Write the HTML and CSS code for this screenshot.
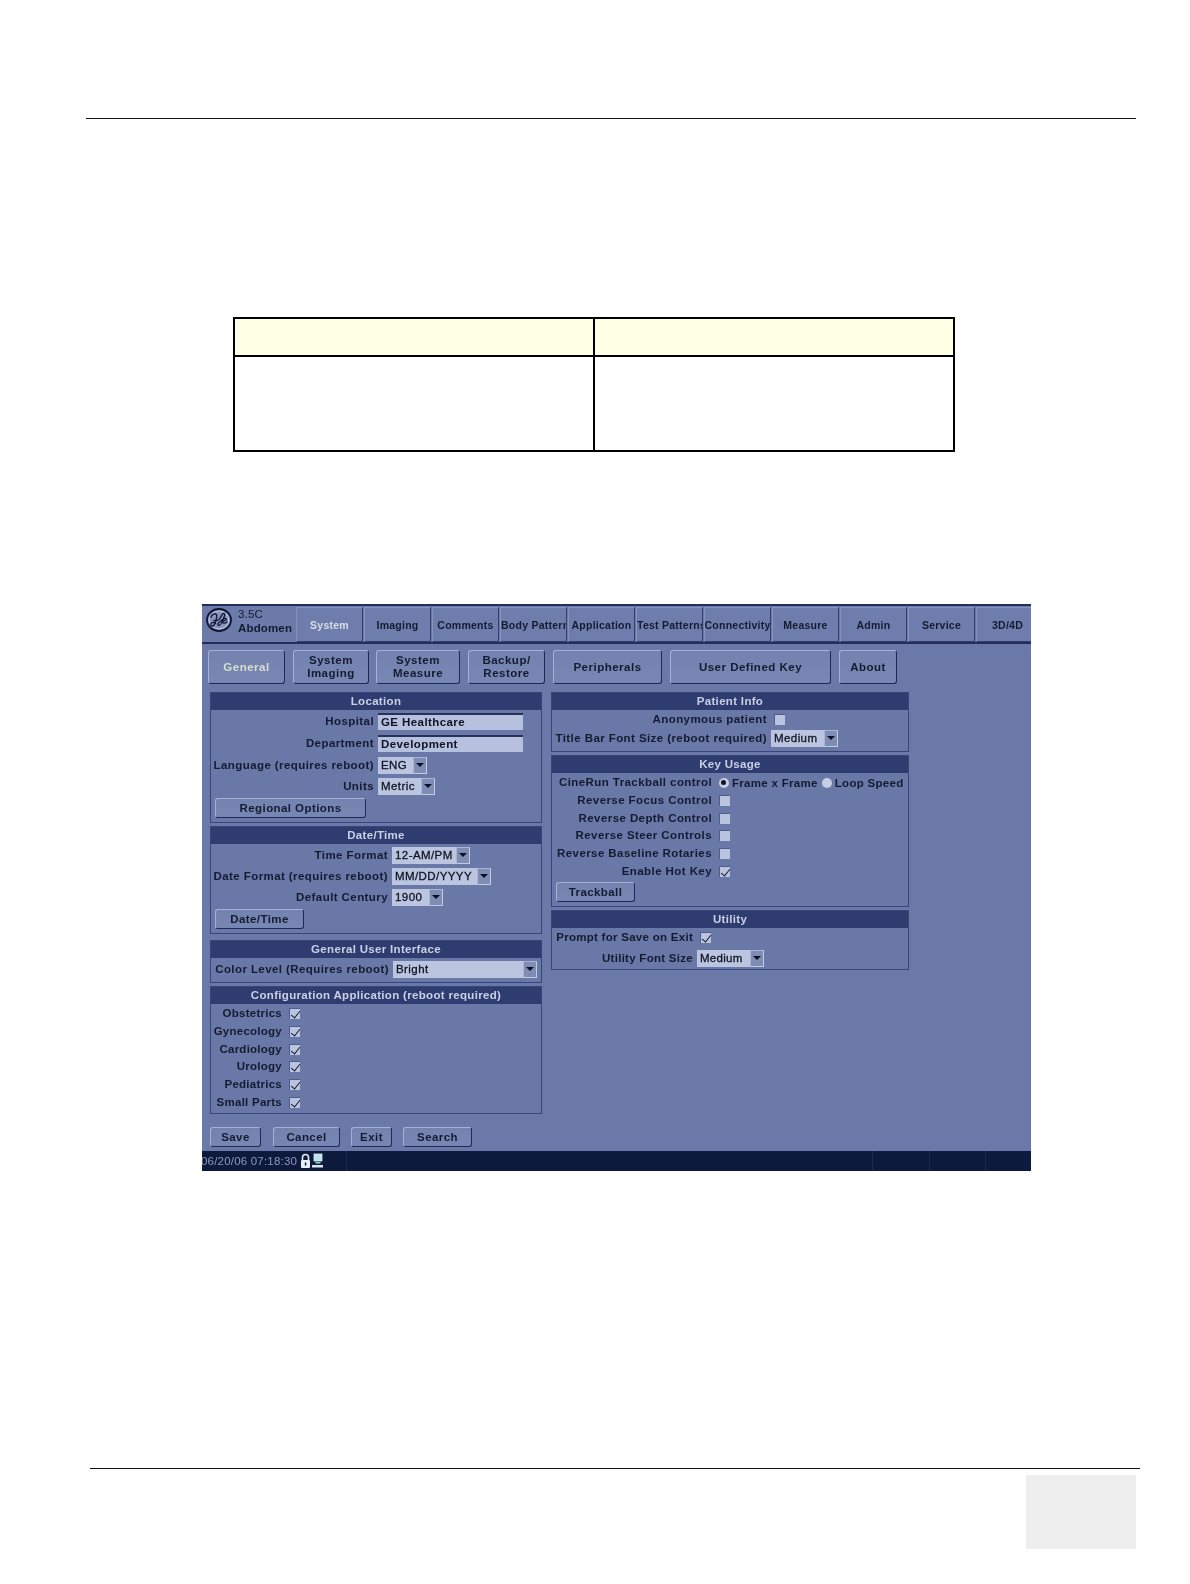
FILE: index.html
```html
<!DOCTYPE html>
<html lang="en">
<head>
<meta charset="utf-8">
<title>System General</title>
<link rel="stylesheet" href="styles.css">
</head>
<body>
<div class="page">
  <hr class="rule rule-top">
  <div class="doc-table">
    <div class="cell head"></div><div class="cell head"></div>
    <div class="cell"></div><div class="cell"></div>
  </div>

  <div class="app">
    <div class="topbar">
      <svg class="logo" viewBox="0 0 26 24" aria-hidden="true">
        <ellipse cx="13" cy="12" rx="12" ry="11" fill="#8995bd" stroke="#0e1630" stroke-width="1.800"/>
        <ellipse cx="13" cy="12" rx="9.800" ry="9" fill="none" stroke="#ccd3e8" stroke-width=".8"/>
        <path d="M5 9.500c0-2.500 2.500-4 4.500-3.500s1.500 3 .5 6-1.500 6-3.500 6-2.500-2-1-3 3-.5 4 .5" fill="none" stroke="#0e1630" stroke-width="1.300" stroke-linecap="round"/>
        <path d="M8 12.500c2 .5 3.500 0 5-1 2-1.500 2.500-6 4.500-6s1 2.500 0 5-2.500 7-4.500 7-1.500-2.500.5-3.500 3-3 5-3.500 2.500 1 1 1.800-3 .7-3 1.700 2 2 4.500 0" fill="none" stroke="#0e1630" stroke-width="1.300" stroke-linecap="round"/>
      </svg>
      <div class="probe"><span>3.5C</span><strong>Abdomen</strong></div>
      <nav class="tabs">
        <div class="tab on">System</div>
        <div class="tab">Imaging</div>
        <div class="tab">Comments</div>
        <div class="tab start">Body Patterns</div>
        <div class="tab">Application</div>
        <div class="tab start">Test Patterns</div>
        <div class="tab">Connectivity</div>
        <div class="tab">Measure</div>
        <div class="tab">Admin</div>
        <div class="tab">Service</div>
        <div class="tab last">3D/4D</div>
      </nav>
    </div>

    <div class="subtabs">
      <div class="btn sub w-general on">General</div>
      <div class="btn sub w-imaging">System<br>Imaging</div>
      <div class="btn sub w-measure">System<br>Measure</div>
      <div class="btn sub w-backup">Backup/<br>Restore</div>
      <div class="btn sub w-periph">Peripherals</div>
      <div class="btn sub w-user">User Defined Key</div>
      <div class="btn sub w-about">About</div>
    </div>

    <div class="columns">
      <div class="col col-left">
        <section class="panel p-location">
          <h3>Location</h3>
          <div class="form f-location">
            <label>Hospital</label><div class="input">GE Healthcare</div>
            <label>Department</label><div class="input">Development</div>
            <label>Language (requires reboot)</label><div class="select s-eng"><span>ENG</span><i></i></div>
            <label>Units</label><div class="select s-metric"><span>Metric</span><i></i></div>
            <div class="btn small b-regional">Regional Options</div>
          </div>
        </section>
        <section class="panel p-date">
          <h3>Date/Time</h3>
          <div class="form f-date">
            <label>Time Format</label><div class="select s-time"><span>12-AM/PM</span><i></i></div>
            <label>Date Format (requires reboot)</label><div class="select s-dformat"><span>MM/DD/YYYY</span><i></i></div>
            <label>Default Century</label><div class="select s-century"><span>1900</span><i></i></div>
            <div class="btn small b-date">Date/Time</div>
          </div>
        </section>
        <section class="panel p-gui">
          <h3>General User Interface</h3>
          <div class="form f-gui">
            <label>Color Level (Requires reboot)</label><div class="select s-bright"><span>Bright</span><i></i></div>
          </div>
        </section>
        <section class="panel p-config">
          <h3>Configuration Application (reboot required)</h3>
          <div class="form f-config">
            <label>Obstetrics</label><div class="check on"></div>
            <label>Gynecology</label><div class="check on"></div>
            <label>Cardiology</label><div class="check on"></div>
            <label>Urology</label><div class="check on"></div>
            <label>Pediatrics</label><div class="check on"></div>
            <label>Small Parts</label><div class="check on"></div>
          </div>
        </section>
      </div>

      <div class="col col-right">
        <section class="panel p-patient">
          <h3>Patient Info</h3>
          <div class="form f-patient">
            <label>Anonymous patient</label><div class="check"></div>
            <label>Title Bar Font Size (reboot required)</label><div class="select s-medium"><span>Medium</span><i></i></div>
          </div>
        </section>
        <section class="panel p-keys">
          <h3>Key Usage</h3>
          <div class="form f-keys">
            <label>CineRun Trackball control</label>
            <div class="radios"><b class="radio on"></b><span class="r1">Frame x Frame</span><b class="radio"></b><span>Loop Speed</span></div>
            <label>Reverse Focus Control</label><div class="check"></div>
            <label>Reverse Depth Control</label><div class="check"></div>
            <label>Reverse Steer Controls</label><div class="check"></div>
            <label>Reverse Baseline Rotaries</label><div class="check"></div>
            <label>Enable Hot Key</label><div class="check on"></div>
            <div class="btn small b-track">Trackball</div>
          </div>
        </section>
        <section class="panel p-utility">
          <h3>Utility</h3>
          <div class="form f-utility">
            <label>Prompt for Save on Exit</label><div class="check on"></div>
            <label>Utility Font Size</label><div class="select s-medium"><span>Medium</span><i></i></div>
          </div>
        </section>
      </div>
    </div>

    <div class="actions">
      <div class="btn act w-save">Save</div>
      <div class="btn act w-cancel">Cancel</div>
      <div class="btn act w-exit">Exit</div>
      <div class="btn act w-search">Search</div>
    </div>

    <div class="status">
      <span class="clock">06/20/06 07:18:30</span>
      <svg class="st-icon" viewBox="0 0 24 16" aria-hidden="true">
        <path d="M2.500 7V4.500a3 3 0 0 1 6 0V7" fill="none" stroke="#e8ecf4" stroke-width="1.600"/>
        <rect x="1" y="7" width="9" height="8" rx="1" fill="#e8ecf4"/>
        <rect x="4.800" y="9.500" width="1.500" height="3" fill="#0d1a3c"/>
        <rect x="14" y="1" width="8" height="7" fill="#b9e6ee" stroke="#dfe8f2" stroke-width=".8"/>
        <rect x="15.500" y="9" width="5" height="1.500" fill="#8fd0d8"/>
        <rect x="12" y="12" width="11" height="2.500" fill="#d9e2ee"/>
      </svg>
      <div class="seg s1"></div><div class="seg s2"></div><div class="seg s3"></div><div class="seg s4"></div>
    </div>
  </div>

  <div class="foot">
    <hr class="rule rule-bottom">
    <div class="pagebox"></div>
  </div>
</div>
</body>
</html>
```
FILE: styles.css
```css
* { box-sizing: border-box; }
html, body { margin: 0; padding: 0; background: #fff; }
body { font-family: "Liberation Sans", Arial, sans-serif; }
.page { width: 1190px; height: 1584px; display: flex; flex-direction: column; }

.rule { border: 0; height: 1px; background: #111; margin: 0; }
.rule-top { margin: 118px 0 0 86px; width: 1050px; }
.rule-bottom { margin: 0 0 0 90px; width: 1050px; }

.doc-table {
  margin: 198px 0 0 233px; width: 722px; height: 135px;
  display: grid; grid-template-columns: 360px 360px; grid-template-rows: 38px 95px;
  border-top: 2px solid #000; border-left: 2px solid #000;
}
.cell { border-right: 2px solid #000; border-bottom: 2px solid #000; background: #fff; }
.cell.head { background: #ffffe6; }

/* Application screenshot */
.app {
  margin: 152px 0 0 202px; width: 829px; height: 567px;
  background: #6b79a8; color: #141b30; overflow: hidden;
  font-size: 11.500px; font-weight: 700; letter-spacing: .42px;
  display: flex; flex-direction: column; filter: blur(.3px);
}
.topbar {
  height: 40px; display: flex; align-items: stretch; flex: none;
  background: #6c7aa9; border-top: 2px solid #232e58; border-bottom: 2px solid #232e58;
}
.logo { width: 26px; height: 24px; margin: 2px 0 0 4px; flex: none; }
.probe { width: 58px; flex: none; margin-left: 6px; display: flex; flex-direction: column; font-size: 11.500px; line-height: 14px; padding-top: 1px; letter-spacing: .15px; white-space: nowrap; }
.probe span { font-weight: 400; }
.tabs { display: flex; gap: 1px; flex: 1; padding-top: 1px; min-width: 0; }
.tab {
  width: 67px; flex: none; display: flex; align-items: center; justify-content: center;
  white-space: nowrap; overflow: hidden; font-size: 10.500px; letter-spacing: .25px;
  background: #6f7dac; border: 1px solid; border-color: #8793bd #323e6c #323e6c #8793bd; color: #141b30;
}
.tab.start { justify-content: flex-start; }
.tab.on { color: #d6dde6; }
.tab.last { width: 62px; border-right: 0; }

.btn {
  display: flex; align-items: center; justify-content: center; text-align: center; flex: none;
  background: linear-gradient(#7482b0, #7886b4); border: 1px solid; border-color: #a6b1d4 #1f2a54 #1f2a54 #a6b1d4;
  border-radius: 3px; color: #141b30;
}
.subtabs { display: flex; margin: 6px 0 0 6px; height: 34px; flex: none; }
.sub { line-height: 13px; letter-spacing: .5px; }
.sub.on { color: #d7decb; }
.w-general { width: 77px; margin-right: 8px; }
.w-imaging { width: 76px; margin-right: 7px; }
.w-measure { width: 84px; margin-right: 8px; }
.w-backup { width: 77px; margin-right: 8px; }
.w-periph { width: 109px; margin-right: 8px; }
.w-user { width: 161px; margin-right: 8px; }
.w-about { width: 58px; }

.columns { display: flex; gap: 9px; margin: 8px 0 0 8px; height: 435px; flex: none; }
.col { display: flex; flex-direction: column; }
.col-left { width: 332px; }
.col-right { width: 358px; }

.panel { border: 1px solid #38457a; flex: none; background: #6a78a8; }
.panel h3 {
  margin: 0; height: 17px; background: #2f3c70; color: #c9d0e4; font-size: 11.500px; font-weight: 700;
  line-height: 16px; text-align: center; letter-spacing: .32px;
}
.p-location { height: 131px; }
.p-date { height: 108px; margin-top: 3px; }
.p-gui { height: 43px; margin-top: 6px; }
.p-config { height: 128px; margin-top: 3px; }
.p-patient { height: 60px; }
.p-keys { height: 152px; margin-top: 3px; }
.p-utility { height: 60px; margin-top: 3px; }

.form { display: grid; align-items: start; column-gap: 4px; }
.form label { text-align: right; white-space: nowrap; line-height: 17px; height: 17px; }
.form .btn { grid-column: 1 / -1; justify-self: start; }

.f-location { grid-template-columns: 163px 1fr; grid-template-rows: 22px 22px 21px 20px 20px; padding-top: 3px; }
.f-date { grid-template-columns: 177px 1fr; grid-template-rows: 21px 21px 20px 20px; padding-top: 3px; }
.f-gui { grid-template-columns: 178px 1fr; padding-top: 3px; }
.f-config { grid-template-columns: 71px 1fr; grid-auto-rows: 17.800px; padding-top: 1px; column-gap: 7px; letter-spacing: .25px; }
.f-patient { grid-template-columns: 215px 1fr; grid-template-rows: 19px 17px; padding-top: 1px; }
.f-keys { grid-template-columns: 160px 1fr; grid-auto-rows: 17.800px; padding-top: 1px; column-gap: 7px; }
.f-utility { grid-template-columns: 141px 1fr; grid-template-rows: 21px 17px; padding-top: 1px; letter-spacing: .28px; }
.f-patient .check, .f-utility .check { margin-left: 3px; }
.f-keys .btn { margin-top: 1px; }

.input {
  width: 145px; height: 17px; background: #b7c0de; border-top: 2px solid #26315c;
  padding: 0 3px; line-height: 14px; white-space: nowrap; color: #0e1424; font-size: 11.500px;
}
.select {
  height: 17px; display: flex; background: #bcc5e0; color: #0e1424; justify-content: space-between;
  line-height: 17px; padding-left: 3px;
}
.select span { white-space: nowrap; font-weight: 400; -webkit-text-stroke: .3px #0e1424; }
.select i {
  position: relative; width: 14px; flex: none; background: #7f8cb4; border: 1px solid; border-color: #aab4d4 #c3cbe2 #c3cbe2 #aab4d4;
}
.select i::after {
  content: ""; position: absolute; left: 2px; top: 5px;
  border: 4px solid transparent; border-top: 4px solid #0b1020; border-bottom: 0;
}
.s-eng { width: 49px; }
.s-metric { width: 57px; }
.s-time { width: 78px; }
.s-dformat { width: 99px; }
.s-century { width: 51px; }
.s-bright { width: 144px; }
.s-medium { width: 67px; }

.check {
  width: 11px; height: 11px; margin-top: 3px; background: #bac3e0; position: relative;
  border-top: 1px solid #505d8c; border-left: 1px solid #505d8c;
}
.check.on::after {
  content: ""; position: absolute; left: 3px; top: 0; width: 4px; height: 8px;
  border-right: 1.500px solid #0e1424; border-bottom: 1.500px solid #0e1424; transform: rotate(38deg);
}
.radios { display: flex; align-items: center; height: 17px; white-space: nowrap; letter-spacing: .3px; }
.radio { width: 10px; height: 10px; border-radius: 50%; background: #c6cee6; flex: none; position: relative; }
.radio.on::after { content: ""; position: absolute; left: 2px; top: 2.500px; width: 5px; height: 5px; border-radius: 50%; background: #0e1424; }
.radios span { margin-left: 3px; }
.radios .r1 { margin-right: 4px; }

.small { height: 20px; }
.b-regional { width: 151px; margin-left: 4px; }
.b-date { width: 89px; margin-left: 4px; }
.b-track { width: 79px; margin-left: 4px; }

.actions { display: flex; margin: 0 0 0 8px; height: 20px; flex: none; }
.act { height: 20px; }
.w-save { width: 51px; margin-right: 12px; }
.w-cancel { width: 67px; margin-right: 11px; }
.w-exit { width: 41px; margin-right: 11px; }
.w-search { width: 69px; }

.status {
  margin-top: 4px; height: 20px; flex: none; background: #0c1a3d; display: flex; align-items: center;
  font-size: 11.500px; font-weight: 400; letter-spacing: .2px; color: #8d97bb; overflow: hidden; position: relative;
}
.clock { margin-left: -1px; white-space: nowrap; }
.st-icon { width: 24px; height: 16px; margin-left: 3px; flex: none; }
.seg { position: absolute; top: 0; bottom: 0; width: 1px; background: #1c2a50; }
.s1 { left: 144px; }
.s2 { left: 670px; }
.s3 { left: 727px; }
.s4 { left: 783px; }

.foot { margin-top: 297px; }
.pagebox { margin: 6px 0 0 1026px; width: 110px; height: 74px; background: #eeeeee; }
```
